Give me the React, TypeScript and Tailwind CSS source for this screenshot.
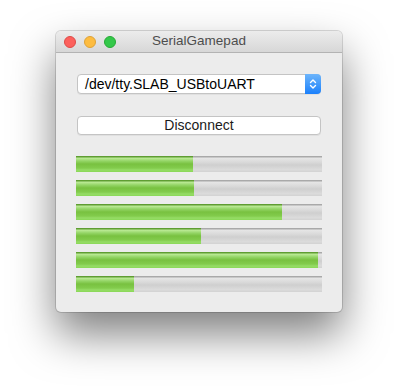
import React from 'react';

const BARS = [117, 118, 206, 125, 242, 58];
const TRACK_WIDTH = 246;

function TrafficLight({ color, ring }: { color: string; ring: string }) {
  return <div className={`w-3 h-3 rounded-full border ${color} ${ring}`} />;
}

function ProgressBar({ value }: { value: number }) {
  return (
    <div className="relative h-4 w-full bg-[linear-gradient(to_bottom,#a9a9a9_0px,#a9a9a9_1px,#e6e6e6_2px,#dadada_6px,#cfcfcf_9px,#dcdcdc_14px,#d4d4d4_15px,#d4d4d4_16px)]">
      <div
        className="h-full bg-[linear-gradient(to_bottom,#5f9d32_0px,#5f9d32_1px,#bdeb98_2px,#94d566_5px,#78c140_8px,#82cb4c_12px,#96dc66_14px,#8ad857_16px)]"
        style={{ width: `${(value / TRACK_WIDTH) * 100}%` }}
      />
    </div>
  );
}

export default function App() {
  return (
    <div className="min-h-[392px] w-[398px] bg-white pt-[31px] pl-[56px] font-['Liberation_Sans',Arial,sans-serif]">
      <div className="w-[286px] rounded-[5px] bg-[#ececec] shadow-[0_22px_44px_rgba(0,0,0,0.5),0_0_0_1px_rgba(0,0,0,0.14)]">
        <div className="relative flex h-[22px] items-center rounded-t-[5px] border-b border-[#b3b3b3] bg-[linear-gradient(to_bottom,#ececec,#d7d7d7)] pl-2">
          <div className="flex gap-2">
            <TrafficLight color="bg-[#fc605c]" ring="border-[#de4a46]" />
            <TrafficLight color="bg-[#fdbc40]" ring="border-[#dea236]" />
            <TrafficLight color="bg-[#34c84a]" ring="border-[#27aa35]" />
          </div>
          <div className="absolute inset-0 flex items-center justify-center text-[13.5px] text-[#4d4d4d]">
            SerialGamepad
          </div>
        </div>

        <div className="px-5 pt-[21px] pb-5">
          <div className="mx-px flex h-5 items-stretch rounded-[4px] border border-[#c4c4c4] bg-white shadow-[0_1px_0_rgba(0,0,0,0.05)]">
            <div className="flex flex-1 items-center pl-[7px] text-[14px] text-black">
              /dev/tty.SLAB_USBtoUART
            </div>
            <div className="-my-px -mr-px flex w-4 items-center justify-center rounded-r-[4px] bg-[linear-gradient(to_bottom,#6db5fb,#1b80fb)]">
              <svg width="8" height="12" viewBox="0 0 8 12" fill="none" stroke="white" strokeWidth="1.4" strokeLinecap="round" strokeLinejoin="round">
                <path d="M1.5 4.5L4 2l2.5 2.5" />
                <path d="M1.5 7.5L4 10l2.5-2.5" />
              </svg>
            </div>
          </div>

          <div className="mx-px mt-[22px] flex h-[19px] items-center justify-center rounded-[4px] border border-[#c4c4c4] bg-white text-[14px] text-[#1a1a1a] shadow-[0_1px_0_rgba(0,0,0,0.05)]">
            Disconnect
          </div>

          <div className="mt-[21px] flex flex-col gap-2">
            {BARS.map((v, i) => (
              <ProgressBar key={i} value={v} />
            ))}
          </div>
        </div>
      </div>
    </div>
  );
}
